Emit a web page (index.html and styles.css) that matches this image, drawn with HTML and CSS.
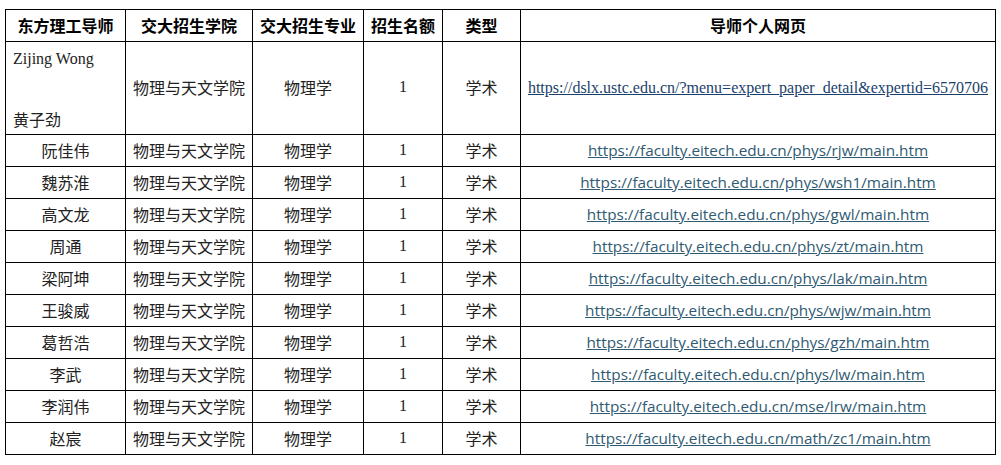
FILE: index.html
```html
<!DOCTYPE html>
<html lang="zh">
<head>
<meta charset="utf-8">
<title>导师列表</title>
<link rel="stylesheet" href="styles.css">
</head>
<body>
<table class="grid">
  <colgroup>
    <col class="c1"><col class="c2"><col class="c3"><col class="c4"><col class="c5"><col class="c6">
  </colgroup>
  <thead>
    <tr class="head">
      <th>东方理工导师</th><th>交大招生学院</th><th>交大招生专业</th><th>招生名额</th><th>类型</th><th>导师个人网页</th>
    </tr>
  </thead>
  <tbody>
    <tr class="tall">
      <td class="name-multi"><p class="en">Zijing Wong</p><p class="blank">&nbsp;</p><p>黄子劲</p></td>
      <td>物理与天文学院</td><td>物理学</td><td class="num">1</td><td>学术</td>
      <td><a class="serif-link" href="#">https://dslx.ustc.edu.cn/?menu=expert_paper_detail&amp;expertid=6570706</a></td>
    </tr>
    <tr><td>阮佳伟</td><td>物理与天文学院</td><td>物理学</td><td class="num">1</td><td>学术</td><td><a href="#">https://faculty.eitech.edu.cn/phys/rjw/main.htm</a></td></tr>
    <tr><td>魏苏淮</td><td>物理与天文学院</td><td>物理学</td><td class="num">1</td><td>学术</td><td><a href="#">https://faculty.eitech.edu.cn/phys/wsh1/main.htm</a></td></tr>
    <tr><td>高文龙</td><td>物理与天文学院</td><td>物理学</td><td class="num">1</td><td>学术</td><td><a href="#">https://faculty.eitech.edu.cn/phys/gwl/main.htm</a></td></tr>
    <tr><td>周通</td><td>物理与天文学院</td><td>物理学</td><td class="num">1</td><td>学术</td><td><a href="#">https://faculty.eitech.edu.cn/phys/zt/main.htm</a></td></tr>
    <tr><td>梁阿坤</td><td>物理与天文学院</td><td>物理学</td><td class="num">1</td><td>学术</td><td><a href="#">https://faculty.eitech.edu.cn/phys/lak/main.htm</a></td></tr>
    <tr><td>王骏威</td><td>物理与天文学院</td><td>物理学</td><td class="num">1</td><td>学术</td><td><a href="#">https://faculty.eitech.edu.cn/phys/wjw/main.htm</a></td></tr>
    <tr><td>葛哲浩</td><td>物理与天文学院</td><td>物理学</td><td class="num">1</td><td>学术</td><td><a href="#">https://faculty.eitech.edu.cn/phys/gzh/main.htm</a></td></tr>
    <tr><td>李武</td><td>物理与天文学院</td><td>物理学</td><td class="num">1</td><td>学术</td><td><a href="#">https://faculty.eitech.edu.cn/phys/lw/main.htm</a></td></tr>
    <tr><td>李润伟</td><td>物理与天文学院</td><td>物理学</td><td class="num">1</td><td>学术</td><td><a href="#">https://faculty.eitech.edu.cn/mse/lrw/main.htm</a></td></tr>
    <tr><td>赵宸</td><td>物理与天文学院</td><td>物理学</td><td class="num">1</td><td>学术</td><td><a href="#">https://faculty.eitech.edu.cn/math/zc1/main.htm</a></td></tr>
  </tbody>
</table>
</body>
</html>
```

FILE: styles.css
```css
html, body {
  margin: 0;
  padding: 0;
  background: #ffffff;
}
body {
  padding: 9px 0 0 5px;
  font-family: "Noto Sans CJK SC", "Noto Sans", sans-serif;
  color: #222222;
}
.grid {
  border-collapse: collapse;
  table-layout: fixed;
  width: 990px;
}
.c1 { width: 120px; }
.c2 { width: 127px; }
.c3 { width: 111px; }
.c4 { width: 79px; }
.c5 { width: 78px; }
.c6 { width: 475px; }
.grid th,
.grid td {
  border: 1px solid #000000;
  padding: 0 2px 2px;
  text-align: center;
  vertical-align: middle;
  height: 29px;
  font-size: 16px;
  line-height: 20px;
  white-space: nowrap;
  overflow: hidden;
}
.grid th {
  font-weight: bold;
  color: #000000;
  font-size: 16px;
}
.grid .tall td {
  height: 89px;
}
.grid td.name-multi {
  text-align: left;
  vertical-align: top;
  padding: 2px 6px 0 7px;
  height: 89px;
}
.name-multi p {
  margin: 0;
  height: 30px;
  line-height: 30px;
  overflow: hidden;
}
.name-multi .en {
  font-family: "Liberation Serif", serif;
  font-size: 16px;
}
.num {
  font-family: "Liberation Serif", serif;
  font-size: 16px;
}
.grid a {
  color: #2f5a72;
  text-decoration: underline;
  font-family: "Open Sans", "Noto Sans", sans-serif;
  font-size: 15.3px;
}
.grid a.serif-link {
  color: #1b3f6b;
  font-family: "Liberation Serif", serif;
  font-size: 16px;
}
```
